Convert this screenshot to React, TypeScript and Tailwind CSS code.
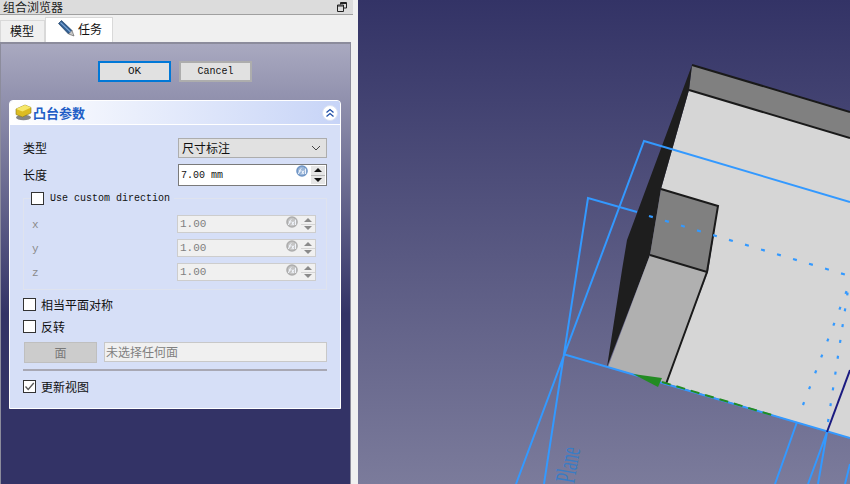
import React from "react";

const cjk = "font-['Noto_Sans_CJK_SC','Liberation_Sans',sans-serif]";
const mono = "font-['Liberation_Mono','Noto_Sans_CJK_SC',monospace]";

const ExprIcon = ({ disabled }: { disabled?: boolean }) => {
  const fill = disabled ? "#adadad" : "#6f95c6";
  return (
    <svg width="12" height="12" viewBox="0 0 12 12" className="shrink-0">
      <circle cx="6" cy="6" r="5.8" fill={fill} />
      <circle cx="6" cy="6" r="4.2" fill="#ffffff" fillOpacity="0.3" />
      <path d="M2 9 C3.4 9 3.6 3.5 5.4 3.5 M3 6 H5 M5.8 5.5 L7.6 9 M8 5.5 L5.8 9 M9.6 3.6 V9" stroke="#f4f8ff" strokeWidth="1" fill="none" />
    </svg>
  );
};

const Arrows = ({ disabled }: { disabled?: boolean }) => {
  const color = disabled ? "#8a8a8a" : "#111111";
  return (
    <div className={`flex flex-col w-[14px] h-full gap-px ${disabled ? "bg-[#d4d4d4]" : "bg-[#b8b8b8]"}`}>
      <div className={`flex-1 flex items-center justify-center ${disabled ? "bg-[#f0f0f0]" : "bg-[#e6e6e6]"}`}>
        <svg width="8" height="4" viewBox="0 0 8 4"><path d="M4 0 L8 4 H0 Z" fill={color} /></svg>
      </div>
      <div className={`flex-1 flex items-center justify-center ${disabled ? "bg-[#f0f0f0]" : "bg-[#e6e6e6]"}`}>
        <svg width="8" height="4" viewBox="0 0 8 4"><path d="M0 0 H8 L4 4 Z" fill={color} /></svg>
      </div>
    </div>
  );
};

const Check = ({ label, checked, className = "" }: { label: string; checked?: boolean; className?: string }) => (
  <div className={`flex items-center h-[13px] ${className}`}>
    <div className="w-[13px] h-[13px] bg-white border border-[#333333] flex items-center justify-center shrink-0">
      {checked && (
        <svg width="11" height="11" viewBox="0 0 11 11">
          <path d="M1.5 5.5 L4.2 8.5 L9.8 2" stroke="#555555" strokeWidth="1.3" fill="none" />
        </svg>
      )}
    </div>
    <span className={`ml-[5px] -mt-px text-[12px] leading-[13px] text-[#111111] ${cjk}`}>{label}</span>
  </div>
);

const AxisRow = ({ name }: { name: string }) => (
  <div className="flex items-center h-[18px]">
    <span className={`w-[145px] pt-[2px] text-[11px] text-[#8a8a8a] ${mono}`}>{name}</span>
    <div className="w-[139px] h-[18px] bg-[#f0f0f0] border border-[#cdcdcd] flex items-center">
      <span className={`ml-[2px] pt-px flex-1 text-[11px] text-[#808080] ${mono}`}>1.00</span>
      <div className="mr-[3px] -mt-[4px]"><ExprIcon disabled /></div>
      <Arrows disabled />
    </div>
  </div>
);

const Scene = () => (
  <svg viewBox="358 0 492 484" className="w-full h-full block">
    <polygon points="692,65 850,112 850,138 689,90" fill="#808080" />
    <polygon points="689,90 850,138 850,438 666,383 708,272 718,206 661,189" fill="#d6d6d6" />
    <polygon points="692,65 689,90 661,189 650,255 607,367 622,270 627,240" fill="#1e1e1e" />
    <polygon points="661,189 718,206 708,272 650,255" fill="#808080" />
    <polygon points="650,255 708,272 666,383 608,367" fill="#b0b0b0" />
    <path d="M692,65 L850,112 M689,90 L850,138 M661,189 L718,206 L707,272 L650,255 M707,272 L666,384" stroke="#1a1a1a" strokeWidth="2" fill="none" />

    <path d="M850,202 L644,141 L516,484 M637,212 L588,198 L544,484 M563,354 L850,438" stroke="#3399ff" strokeWidth="2" fill="none" />
    <path d="M797,422 L775,484 M827,432 L808,484 M827,432 L818,484 M850,464 L845,484" stroke="#3399ff" strokeWidth="2" fill="none" />
    <path d="M649,216 L850,276" stroke="#3399ff" strokeWidth="2.2" strokeDasharray="4 12.7" fill="none" />
    <path d="M803,405 L850,282" stroke="#3399ff" strokeWidth="2.2" strokeDasharray="3 14" fill="none" />
    <path d="M828,422 L848,290" stroke="#3399ff" strokeWidth="2.2" strokeDasharray="3 13" fill="none" />
    <path d="M827,432 L850,370" stroke="#1a1a80" strokeWidth="2" fill="none" />

    <polygon points="633,374 662,378 658,387" fill="#228b22" />
    <path d="M662,382 L772,415" stroke="#228b22" strokeWidth="2" strokeDasharray="9 6" fill="none" />

    <text
      transform="translate(574,484) rotate(-80) scale(0.85,1.5)"
      className="font-['Liberation_Serif',serif]"
      fontSize="19"
      fill="#3a7cc4"
    >
      Plane
    </text>
  </svg>
);

export default function App() {
  return (
    <div className="w-[850px] h-[484px] flex overflow-hidden bg-[#f0f0f0]">
      <div className="w-[358px] h-full flex flex-col shrink-0">
        {/* dock title */}
        <div className="h-[15px] w-[353px] bg-[#dcdcdc] border-b border-[#a0a0a0] flex items-center justify-between px-[3px]">
          <div className={`h-[14px] text-[12px] leading-[14px] text-[#222222] ${cjk}`}>组合浏览器</div>
          <svg width="10" height="10" viewBox="0 0 10 10" className="mr-[3px]">
            <path d="M3.5 2.5 V0.5 H9.5 V6 H7 M0.5 3 H6.5 V9.5 H0.5 Z M0.5 4 H6.5 M3.5 1.5 H9.5" stroke="#222222" fill="none" />
          </svg>
        </div>

        {/* tabs */}
        <div className="h-[27px] w-[351px] flex items-end">
          <div className={`w-[45px] h-[22px] bg-[#f0f0f0] border border-[#d9d9d9] border-b-0 text-[12px] text-[#111111] pl-[9px] leading-[19px] ${cjk}`}>
            模型
          </div>
          <div className="w-[68px] h-[25px] bg-white border border-[#d9d9d9] border-b-0 flex items-center pl-[12px]">
            <svg width="17" height="17" viewBox="0 0 17 17" className="shrink-0 -mt-[3px]">
              <path d="M0.5 3.5 L3.5 0.5 L14 10.5 L10.5 14 Z" fill="#2f5c8f" stroke="#1f3f66" strokeWidth="0.7" />
              <path d="M10.5 14 L14 10.5 L16 16 Z" fill="#c9c9c9" stroke="#555555" strokeWidth="0.6" />
              <path d="M2.5 2.5 L12.5 12" stroke="#7ba4d4" strokeWidth="1.2" />
            </svg>
            <span className={`ml-[3px] -mt-[2px] text-[12px] text-[#111111] ${cjk}`}>任务</span>
          </div>
        </div>

        {/* task panel */}
        <div className="flex-1 w-[351px] border-t-2 border-x border-[#8c8c9c] bg-[linear-gradient(#a9a9c0_0,#333366_270px)] pt-[17px]">
          <div className="flex justify-start pl-[97px] gap-[8px]">
            <button className={`w-[73px] h-[21px] bg-[#e1e1e1] border-2 border-[#0078d7] text-[11px] text-[#111111] ${mono}`}>OK</button>
            <button className={`w-[73px] h-[21px] bg-[#e1e1e1] border-2 border-[#adadad] text-[10px] text-[#111111] ${mono}`}>Cancel</button>
          </div>

          {/* pad parameters */}
          <div className="ml-[8px] mt-[18px] w-[332px] border border-white rounded-t-[4px] bg-[#d6dff7]">
            <div className="h-[24px] rounded-t-[3px] border-b border-white bg-[linear-gradient(90deg,#ffffff,#c7d4f7)] flex items-center pl-[5px] pr-[2px]">
              <svg width="17" height="17" viewBox="0 0 17 17" className="shrink-0">
                <ellipse cx="8.5" cy="13.5" rx="7.5" ry="2.8" fill="#858585" />
                <path d="M1 5 L10 1 L16 3.5 V9 L7.5 13 L1 10.5 Z" fill="#dcbc22" stroke="#8a7a1a" strokeWidth="0.6" />
                <path d="M1 5 L10 1 L16 3.5 L7.5 7.5 Z" fill="#f6e769" />
              </svg>
              <span className={`ml-px flex-1 text-[13px] font-bold text-[#215dc6] ${cjk}`}>凸台参数</span>
              <div className="w-[16px] h-[16px] rounded-full bg-white border border-[#dbe2f3] flex items-center justify-center">
                <svg width="10" height="10" viewBox="0 0 10 10">
                  <path d="M1.5 4.5 L5 1.5 L8.5 4.5 M1.5 8.5 L5 5.5 L8.5 8.5" stroke="#1f4fa8" strokeWidth="1.3" fill="none" />
                </svg>
              </div>
            </div>

            <div className="px-[13px] pt-[13px] pb-[15px]">
              <div className="flex items-center h-[20px]">
                <span className={`w-[155px] text-[12px] text-[#111111] ${cjk}`}>类型</span>
                <div className="w-[149px] h-[20px] bg-[#e1e1e1] border border-[#adadad] flex items-center justify-between pl-[3px] pr-[5px]">
                  <span className={`text-[12px] text-[#111111] ${cjk}`}>尺寸标注</span>
                  <svg width="10" height="6" viewBox="0 0 10 6"><path d="M1 1 L5 5 L9 1" stroke="#444444" fill="none" /></svg>
                </div>
              </div>

              <div className="flex items-center h-[22px] mt-[6px]">
                <span className={`w-[155px] text-[12px] text-[#111111] ${cjk}`}>长度</span>
                <div className="w-[149px] h-[22px] bg-white border border-[#7a7a7a] flex items-center py-px pr-px">
                  <span className={`ml-[2px] flex-1 text-[10px] text-[#111111] ${mono}`}>7.00 mm</span>
                  <div className="mr-[3px] -mt-[8px]"><ExprIcon /></div>
                  <Arrows />
                </div>
              </div>

              <div className="mt-[12px] h-[92px] border border-[#dfe3ee]">
                <div className="-mt-[7px] ml-[7px] w-fit bg-[#d6dff7] pr-[4px] flex items-center h-[13px]">
                  <div className="w-[13px] h-[13px] bg-white border border-[#333333]" />
                  <span className={`ml-[6px] text-[10px] leading-[13px] text-[#111111] ${mono}`}>Use custom direction</span>
                </div>
                <div className="mt-[10px] pl-[8px] flex flex-col gap-[6px]">
                  <AxisRow name="x" />
                  <AxisRow name="y" />
                  <AxisRow name="z" />
                </div>
              </div>

              <Check label="相当平面对称" className="mt-[8px]" />
              <Check label="反转" className="mt-[9px]" />

              <div className="flex mt-[9px] pl-px">
                <button className={`w-[73px] h-[21px] bg-[#cccccc] border border-[#bfbfbf] text-[12px] text-[#787878] ${cjk}`}>面</button>
                <div className={`ml-[7px] w-[223px] h-[20px] bg-[#f0f0f0] border border-[#c8c8c8] pl-px text-[12px] leading-[18px] text-[#808080] ${cjk}`}>
                  未选择任何面
                </div>
              </div>

              <div className="mt-[6px] h-[2px] bg-[#a8a8b4]" />
              <Check label="更新视图" checked className="mt-[9px]" />
            </div>
          </div>
        </div>
      </div>

      {/* 3d view */}
      <div className="flex-1 h-full bg-[linear-gradient(#333366,#7b7b9b)]">
        <Scene />
      </div>
    </div>
  );
}
